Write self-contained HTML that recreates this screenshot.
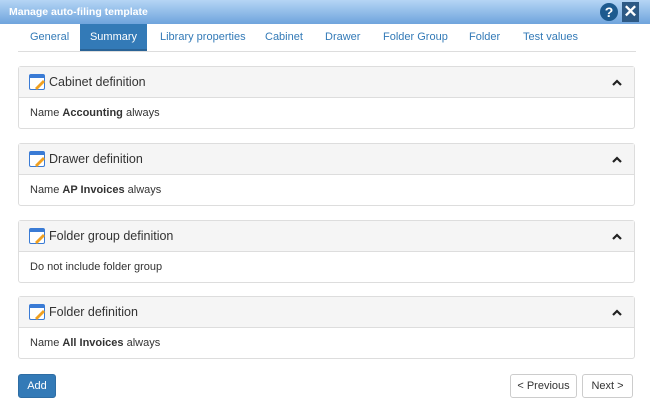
<!DOCTYPE html>
<html><head><style>
*{box-sizing:border-box;margin:0;padding:0}
body{width:650px;height:414px;background:#fff;font-family:"Liberation Sans",Arial,sans-serif;font-size:11px;color:#333;position:relative;overflow:hidden}
.title{position:absolute;left:0;top:0;width:650px;height:24px;background:linear-gradient(#b5d5f5,#6fa4dd);color:#fff;font-weight:bold;font-size:10.5px;line-height:24px;padding-left:9px}
.help{position:absolute;left:600px;top:3px;width:18px;height:18px;border-radius:50%;background:#1d5a8f;color:#fff;font-weight:bold;font-size:14px;text-align:center;line-height:18px}
.close{position:absolute;left:622px;top:2px;width:17px;height:20px;background:#2d5985;color:#fff;font-weight:bold;font-size:17px;text-align:center;line-height:20px}
.tabs{position:absolute;left:18px;top:24px;width:618px;height:28px;border-bottom:1px solid #ddd}
.tab{position:absolute;top:0;height:27px;line-height:27px;color:#337ab7;font-size:11px}
.tab.act{background:#337ab7;color:#fff;text-align:center;border-bottom:2px solid #2a6396;line-height:26px}
.panel{position:absolute;left:18px;width:617px;border:1px solid #ddd;border-radius:3px}
.ph{height:31px;background:#f5f5f5;border-bottom:1px solid #ddd;font-size:12.5px;line-height:31px;padding-left:30px;position:relative;color:#333}
.ph svg.ic{position:absolute;left:10px;top:7px}
.ph svg.car{position:absolute;right:12px;top:12px}
.pb{height:30px;line-height:31px;padding-left:11px;font-size:11px}
.btn{position:absolute;top:374px;height:24px;line-height:23px;border:1px solid #ccc;border-radius:3px;text-align:center;font-size:11px;color:#333;background:#fff}
</style></head><body>
<div class="title">Manage auto-filing template</div>
<div class="help">?</div><div class="close">✕</div>
<div class="tabs">
<div class="tab" style="left:12px">General</div>
<div class="tab act" style="left:62px;width:67px">Summary</div>
<div class="tab" style="left:142px">Library properties</div>
<div class="tab" style="left:247px">Cabinet</div>
<div class="tab" style="left:307px">Drawer</div>
<div class="tab" style="left:365px">Folder Group</div>
<div class="tab" style="left:451px">Folder</div>
<div class="tab" style="left:505px">Test values</div>
</div>
<div class="panel" style="top:66px"><div class="ph"><svg class="ic" width="17" height="17"><rect x="0.5" y="0.5" width="15" height="15" rx="1.5" fill="#fff" stroke="#3a7bd5"/><rect x="0.5" y="0.5" width="15" height="3.5" fill="#3a7bd5"/><path d="M6 14 L14 6 L16 8 L8 16 Z" fill="#f0a020"/></svg>Cabinet definition<svg class="car" width="10" height="7"><path d="M1 6 L5 2 L9 6" fill="none" stroke="#222" stroke-width="2.2"/></svg></div><div class="pb">Name <b>Accounting</b> always</div></div>
<div class="panel" style="top:143px"><div class="ph"><svg class="ic" width="17" height="17"><rect x="0.5" y="0.5" width="15" height="15" rx="1.5" fill="#fff" stroke="#3a7bd5"/><rect x="0.5" y="0.5" width="15" height="3.5" fill="#3a7bd5"/><path d="M6 14 L14 6 L16 8 L8 16 Z" fill="#f0a020"/></svg>Drawer definition<svg class="car" width="10" height="7"><path d="M1 6 L5 2 L9 6" fill="none" stroke="#222" stroke-width="2.2"/></svg></div><div class="pb">Name <b>AP Invoices</b> always</div></div>
<div class="panel" style="top:220px"><div class="ph"><svg class="ic" width="17" height="17"><rect x="0.5" y="0.5" width="15" height="15" rx="1.5" fill="#fff" stroke="#3a7bd5"/><rect x="0.5" y="0.5" width="15" height="3.5" fill="#3a7bd5"/><path d="M6 14 L14 6 L16 8 L8 16 Z" fill="#f0a020"/></svg>Folder group definition<svg class="car" width="10" height="7"><path d="M1 6 L5 2 L9 6" fill="none" stroke="#222" stroke-width="2.2"/></svg></div><div class="pb">Do not include folder group</div></div>
<div class="panel" style="top:296px"><div class="ph"><svg class="ic" width="17" height="17"><rect x="0.5" y="0.5" width="15" height="15" rx="1.5" fill="#fff" stroke="#3a7bd5"/><rect x="0.5" y="0.5" width="15" height="3.5" fill="#3a7bd5"/><path d="M6 14 L14 6 L16 8 L8 16 Z" fill="#f0a020"/></svg>Folder definition<svg class="car" width="10" height="7"><path d="M1 6 L5 2 L9 6" fill="none" stroke="#222" stroke-width="2.2"/></svg></div><div class="pb">Name <b>All Invoices</b> always</div></div>
<div class="btn" style="left:18px;width:38px;background:#337ab7;border-color:#2e6da4;color:#fff">Add</div>
<div class="btn" style="left:510px;width:67px">&lt; Previous</div>
<div class="btn" style="left:582px;width:51px">Next &gt;</div>
</body></html>
